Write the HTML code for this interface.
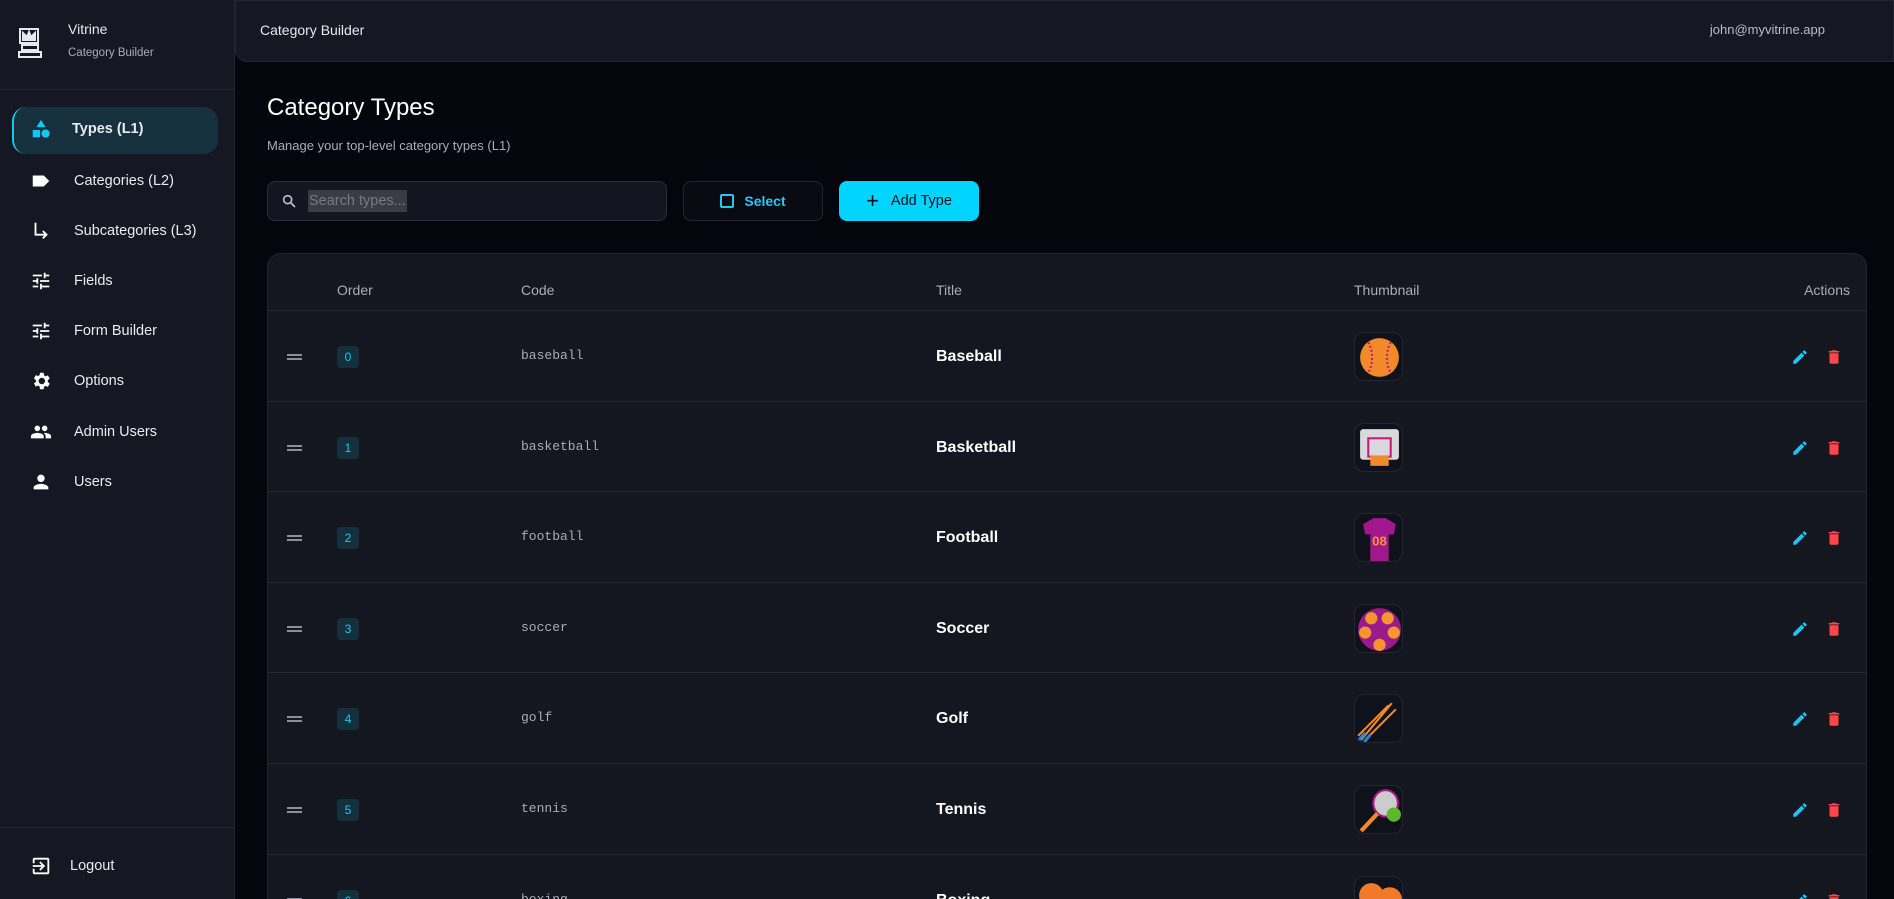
<!DOCTYPE html>
<html style="overflow:hidden;width:1894px;height:899px"><head><meta charset="utf-8"><style>
*{box-sizing:border-box;margin:0;padding:0}
body{width:1894px;height:899px;overflow:hidden;background:#05060d;font-family:"Liberation Sans",sans-serif;color:#e6e8ee;position:relative}
.side{position:absolute;left:0;top:0;width:235px;height:899px;background:#151722;border-right:1px solid #22252f}
.abs{position:absolute}
.nav{position:absolute;left:30px;font-size:14.5px;color:#e9ebf0;display:flex;align-items:center;gap:22px}
.nav svg{width:22px;height:22px;fill:#fff}
.hdr{position:absolute;left:235px;top:0;width:1659px;height:62px;background:#151722;border:1px solid #23262f;border-radius:0 0 0 12px}
.tbl{position:absolute;left:267px;top:253px;width:1600px;height:646px;background:#141620;border:1px solid #22252f;border-bottom:none;border-radius:14px 14px 0 0;overflow:hidden}
.th{position:absolute;top:28px;font-size:14px;color:#a9adb9}
.row{position:absolute;left:0;width:1600px;height:91px;border-top:1px solid #262934}
.row>*{position:absolute}
.handle{left:19px;top:43px;width:15px;height:6px;border-top:2px solid #8a8f9b;border-bottom:2px solid #8a8f9b}
.badge{left:69px;top:35px;width:22px;height:22px;background:#14303d;border-radius:4px;color:#1fc3f0;font-size:12px;text-align:center;line-height:22px}
.code{left:253px;top:37px;font-family:"Liberation Mono",monospace;font-size:13px;color:#a9adb9}
.title{left:668px;top:37px;font-size:16px;font-weight:bold;color:#fff}
.thumb{left:1086px;top:21px;width:49px;height:49px;border:1px solid #23262f;border-radius:10px;background:#10121b;overflow:hidden}
.ed{left:1523px;top:37px}
.tr{left:1557px;top:37px}
</style></head><body>
<div class="side">
 <svg class="abs" style="left:18px;top:27px" width="24" height="33" viewBox="0 0 24 33" fill="none" stroke="#e6e8ee" stroke-width="2"><rect x="2" y="2" width="18" height="14"/><path d="M5 13 L5 6 L9 10 L11 5 L13 10 L17 6 L17 13Z" fill="#e6e8ee"/><rect x="4" y="18" width="16" height="5"/><rect x="1" y="25" width="22" height="5"/></svg>
 <div class="abs" style="left:68px;top:21px;font-size:14px">Vitrine</div>
 <div class="abs" style="left:68px;top:47px;font-size:11.5px;color:#a9adb9">Category Builder</div>
 <div class="abs" style="left:0;top:89px;width:235px;border-top:1px solid #262934"></div>
 <div class="abs" style="left:12px;top:107px;width:206px;height:47px;background:#17303d;border-radius:14px;border-left:2px solid #10c8f4"></div>
 <div class="nav" style="top:118px"><svg viewBox="0 0 24 24" style="fill:#10c8f4"><path d="M12 2l5 8H7z"/><rect x="3" y="13" width="8" height="8"/><circle cx="17" cy="17" r="4.5"/></svg><span style="font-weight:bold;margin-left:-2px">Types (L1)</span></div>
 <div class="nav" style="top:170px"><svg viewBox="0 0 24 24"><path d="M3 6h12l6 6-6 6H3z"/></svg><span>Categories (L2)</span></div>
 <div class="nav" style="top:220px"><svg viewBox="0 0 24 24" fill="none" style="fill:none;stroke:#fff;stroke-width:2"><path d="M6 3v13h12M14 12l4 4-4 4"/></svg><span>Subcategories (L3)</span></div>
 <div class="nav" style="top:270px"><svg viewBox="0 0 24 24"><path d="M3 17v2h6v-2zM3 5v2h10V5zm10 16v-2h8v-2h-8v-2h-2v6zM7 9v2H3v2h4v2h2V9zm14 4v-2H11v2zm-6-4h2V7h4V5h-4V3h-2z"/></svg><span>Fields</span></div>
 <div class="nav" style="top:320px"><svg viewBox="0 0 24 24"><path d="M3 17v2h6v-2zM3 5v2h10V5zm10 16v-2h8v-2h-8v-2h-2v6zM7 9v2H3v2h4v2h2V9zm14 4v-2H11v2zm-6-4h2V7h4V5h-4V3h-2z"/></svg><span>Form Builder</span></div>
 <div class="nav" style="top:370px"><svg viewBox="0 0 24 24"><path d="M19.4 13c.04-.3.06-.65.06-1s-.02-.7-.07-1l2.1-1.65-2-3.46-2.49 1a7.3 7.3 0 0 0-1.7-1L14.9 3h-4l-.38 2.650c-.6.25-1.170.6-1.700 1l-2.49-1-2 3.46L6.44 11c-.04.3-.07.66-.07 1s.02.7.07 1l-2.1 1.65 2 3.46 2.49-1c.52.4 1.08.73 1.7 1L10.9 21h4l.38-2.65c.6-.25 1.17-.6 1.7-1l2.49 1 2-3.46zM12.9 15.5a3.5 3.5 0 1 1 0-7 3.5 3.5 0 0 1 0 7z"/></svg><span>Options</span></div>
 <div class="nav" style="top:421px"><svg viewBox="0 0 24 24"><path d="M16 11c1.66 0 3-1.34 3-3s-1.34-3-3-3-3 1.34-3 3 1.34 3 3 3zm-8 0c1.66 0 3-1.34 3-3S9.66 5 8 5 5 6.34 5 8s1.34 3 3 3zm0 2c-2.33 0-7 1.170-7 3.5V19h14v-2.5C15 14.17 10.33 13 8 13zm8 0c-.29 0-.62.02-.97.05 1.16.84 1.97 1.97 1.97 3.45V19h6v-2.5c0-2.33-4.67-3.5-7-3.5z"/></svg><span>Admin Users</span></div>
 <div class="nav" style="top:471px"><svg viewBox="0 0 24 24"><path d="M12 12c2.21 0 4-1.79 4-4s-1.79-4-4-4-4 1.79-4 4 1.79 4 4 4zm0 2c-2.67 0-8 1.34-8 4v2h16v-2c0-2.66-5.33-4-8-4z"/></svg><span>Users</span></div>
 <div class="abs" style="left:0;top:827px;width:235px;border-top:1px solid #262934"></div>
 <div class="nav" style="top:855px"><svg viewBox="0 0 24 24"><path d="M10.1 15.6l1.4 1.4 5-5-5-5-1.4 1.4 2.6 2.6H3v2h9.7zM19 3H5a2 2 0 0 0-2 2v4h2V5h14v14H5v-4H3v4a2 2 0 0 0 2 2h14a2 2 0 0 0 2-2V5a2 2 0 0 0-2-2z"/></svg><span style="margin-left:-4px">Logout</span></div>
</div>
<div class="hdr">
 <div class="abs" style="left:24px;top:21px;font-size:14px">Category Builder</div>
 <div class="abs" style="right:68px;top:21px;font-size:13px;color:#b9bdc8">john@myvitrine.app</div>
</div>
<div class="abs" style="left:267px;top:94px;font-size:24px;color:#fff">Category Types</div>
<div class="abs" style="left:267px;top:138px;font-size:13px;color:#a9adb9">Manage your top-level category types (L1)</div>
<div class="abs" style="left:267px;top:181px;width:400px;height:40px;border:1px solid #2a2d38;border-radius:8px;background:#131520">
 <svg class="abs" style="left:13px;top:11px" width="16" height="16" viewBox="0 0 24 24" fill="none" stroke="#c0c4cc" stroke-width="2.4"><circle cx="10" cy="10" r="6"/><path d="M15 15l6 6"/></svg>
 <div class="abs" style="left:40px;top:8px;height:22px;padding:0 1px;white-space:nowrap;background:#3a3c44;color:#777a84;font-size:14.5px;line-height:22px">Search types...</div>
</div>
<div class="abs" style="left:683px;top:181px;width:140px;height:40px;border:1px solid #23262f;border-radius:8px;background:#0a0b12;color:#22c8f2;font-weight:bold;font-size:14px;display:flex;align-items:center;justify-content:center;gap:10px"><span style="width:14px;height:14px;border:2px solid #22c8f2;border-radius:2px;display:inline-block"></span>Select</div>
<div class="abs" style="left:839px;top:181px;width:140px;height:40px;border-radius:8px;background:#00d4ff;color:#0c1220;font-size:14.5px;display:flex;align-items:center;justify-content:center;gap:12px"><span style="font-size:22px;line-height:14px">+</span>Add Type</div>
<div class="tbl">
 <div class="th" style="left:69px">Order</div>
 <div class="th" style="left:253px">Code</div>
 <div class="th" style="left:668px">Title</div>
 <div class="th" style="left:1086px">Thumbnail</div>
 <div class="th" style="right:16px">Actions</div>
 <div id="rows"></div>
</div>
<script>
const d=[["baseball","Baseball",'<circle cx="24" cy="24" r="19" fill="#f28a2a"/><path d="M13 9c5 9 5 21 0 30M35 9c-5 9-5 21 0 30" stroke="#c2188a" stroke-width="2" fill="none" stroke-dasharray="2 2"/>'],
["basketball","Basketball",'<rect x="5" y="5" width="38" height="30" rx="3" fill="#d8d9dd"/><rect x="13" y="14" width="22" height="18" fill="none" stroke="#d1157d" stroke-width="2"/><rect x="15" y="31" width="18" height="10" fill="#f28a2a"/>'],
["football","Football",'<path d="M8 10l10-6h12l10 6-2 10h-5v26H15V20h-5z" fill="#a2178d"/><text x="24" y="31" font-size="13" text-anchor="middle" fill="#f7952d" font-family="Liberation Sans" font-weight="bold">08</text>'],
["soccer","Soccer",'<circle cx="24" cy="24" r="21" fill="#9a1a8b"/><circle cx="16" cy="13" r="6" fill="#f7952d"/><circle cx="32" cy="13" r="6" fill="#f7952d"/><circle cx="10" cy="27" r="6" fill="#f7952d"/><circle cx="38" cy="27" r="6" fill="#f7952d"/><circle cx="24" cy="39" r="6" fill="#f7952d"/>'],
["golf","Golf",'<path d="M6 44L36 8M10 44L40 14M3 40L33 10" stroke="#f28a2a" stroke-width="2"/><path d="M4 44l6-7M9 46l6-7" stroke="#1a8be0" stroke-width="3"/>'],
["tennis","Tennis",'<ellipse cx="30" cy="17" rx="12" ry="13" fill="#ccc" stroke="#b0178a" stroke-width="2"/><path d="M22 27L6 44" stroke="#f28a2a" stroke-width="4"/><circle cx="38" cy="28" r="7" fill="#5cb82a"/>'],
["boxing","Boxing",'<circle cx="16" cy="18" r="12" fill="#f07a2a"/><circle cx="34" cy="22" r="12" fill="#f07a2a"/>']];
let h="";d.forEach((r,i)=>{h+=`<div class="row" style="top:${56+i*90.6}px"><div class="handle"></div><div class="badge">${i}</div><div class="code">${r[0]}</div><div class="title">${r[1]}</div><div class="thumb"><svg width="49" height="49" viewBox="0 0 48 48">${r[2]}</svg></div><svg class="ed" width="18" height="18" viewBox="0 0 24 24" fill="#1fc3f0"><path d="M3 17.25V21h3.75L17.8 9.940l-3.75-3.75zM20.7 7.04a1 1 0 0 0 0-1.41l-2.34-2.34a1 1 0 0 0-1.41 0l-1.83 1.83 3.75 3.75z"/></svg><svg class="tr" width="18" height="18" viewBox="0 0 24 24" fill="#ff4747"><path d="M6 19a2 2 0 0 0 2 2h8a2 2 0 0 0 2-2V7H6zM19 4h-3.5l-1-1h-5l-1 1H5v2h14z"/></svg></div>`});
document.getElementById("rows").innerHTML=h;
</script>
</body></html>
